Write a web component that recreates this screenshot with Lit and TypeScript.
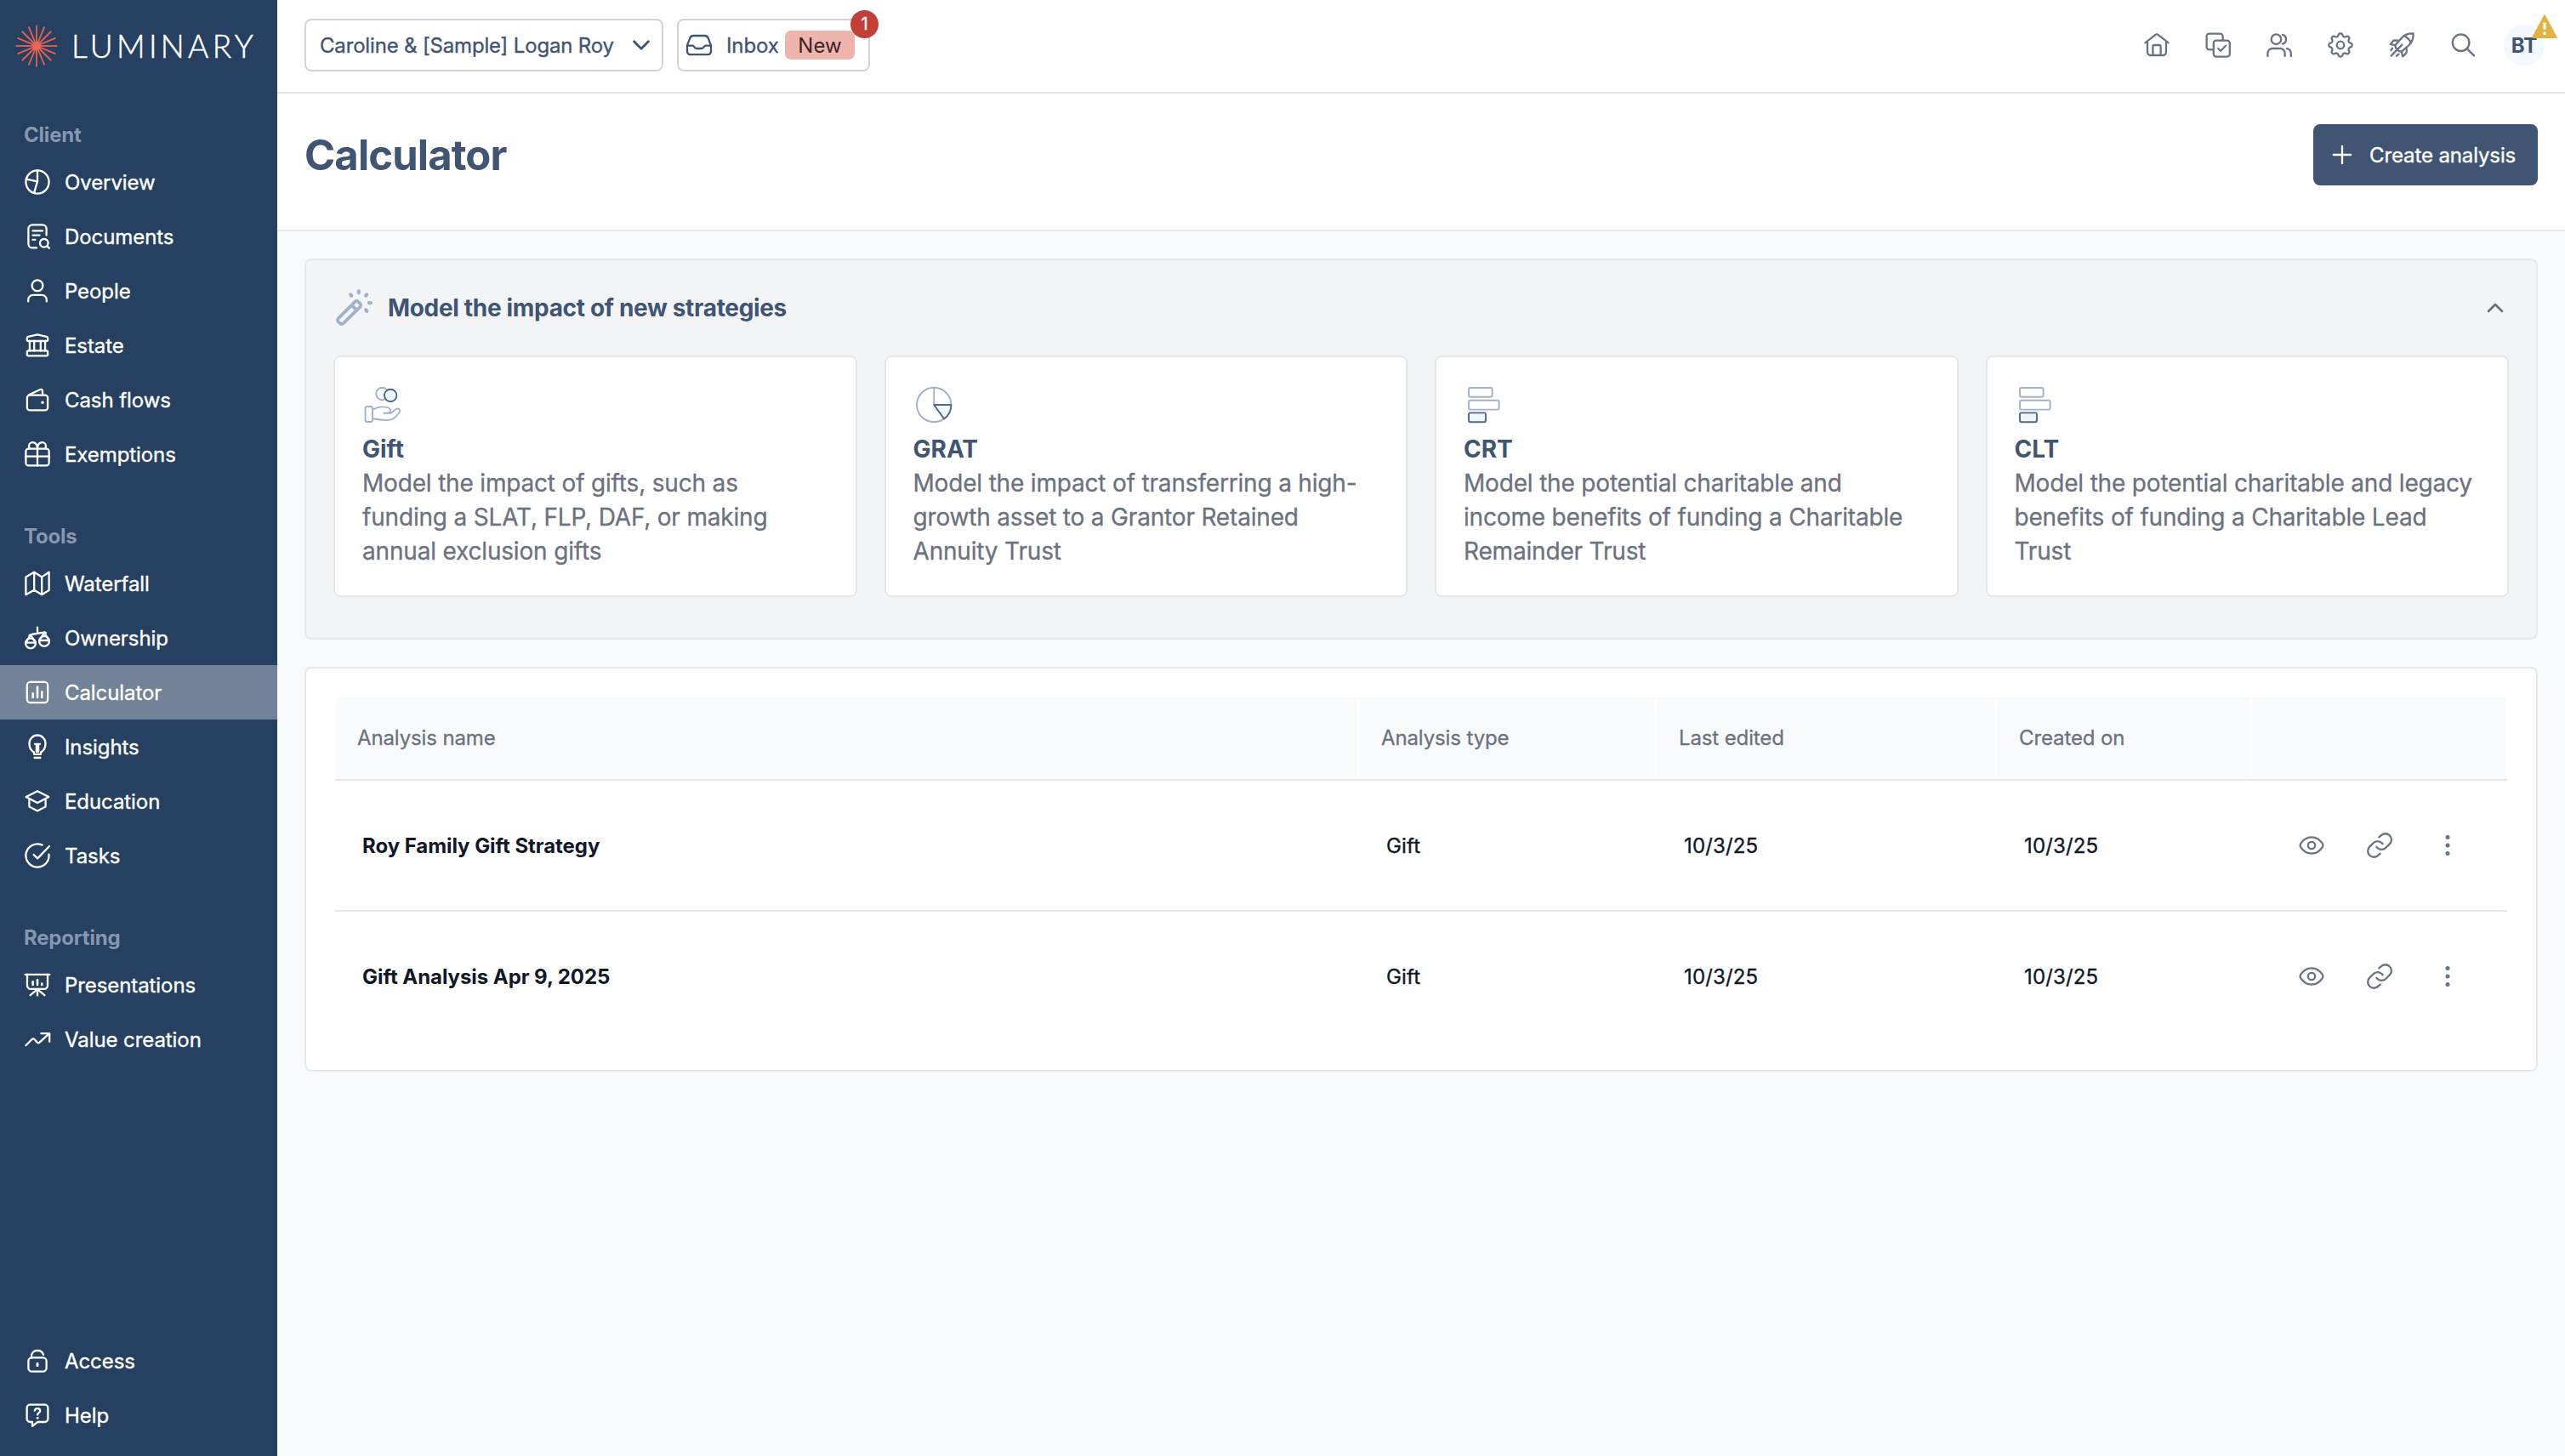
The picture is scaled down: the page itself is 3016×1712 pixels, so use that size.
import { LitElement, html, css, svg, nothing } from "lit";
import type { TemplateResult } from "lit";
import { customElement, property } from "lit/decorators.js";
import { classMap } from "lit/directives/class-map.js";

/** Outline of an eight-lobed cog, sampled around the centre. */
const cogPath = (() => {
  const points: string[] = [];
  for (let i = 0; i < 160; i++) {
    const a = (i / 160) * Math.PI * 2;
    const wave = Math.tanh(1.5 * Math.cos(8 * a)) / Math.tanh(1.5);
    const r = 12.1 + 1.5 * wave;
    points.push(`${(18 + r * Math.cos(a)).toFixed(2)} ${(18 + r * Math.sin(a)).toFixed(2)}`);
  }
  return `M${points.join("L")}Z`;
})();

/** Line icons, all drawn on a 36 x 36 grid. */
const ICONS: Record<string, TemplateResult> = {
  overview: svg`<circle cx="18" cy="18" r="13.6"/><path d="M18 4.4V17.6M4.8 14.6L18 17.4L14 31"/>`,
  documents: svg`<path d="M28.6 16.5V9A4.6 4.6 0 0 0 24 4.4H12A4.6 4.6 0 0 0 7.4 9V27A4.6 4.6 0 0 0 12 31.4H17"/><path d="M12.5 11.4H24M12.5 16.6H20.6M12.5 21.8H15.4"/><circle cx="25.8" cy="25.8" r="4.8"/><path d="M29.4 29.4L32 31.8"/>`,
  person: svg`<circle cx="18" cy="11.8" r="6.4"/><path d="M7.2 30.5V28.4A5.6 5.6 0 0 1 12.8 22.8H23.2A5.6 5.6 0 0 1 28.8 28.4V30.5"/>`,
  bank: svg`<path d="M5.8 9.6Q5.8 8.2 7.2 7.8L17 5.6Q18 5.4 19 5.6L28.8 7.8Q30.2 8.2 30.2 9.6V11.4Q30.2 13 28.6 13H7.4Q5.8 13 5.8 11.4Z"/><path d="M8.9 13V24.4M14.2 13V24.4M21.8 13V24.4M27.1 13V24.4"/><rect x="5.8" y="24.4" width="24.4" height="6" rx="1.6"/>`,
  wallet: svg`<rect x="5.9" y="12.6" width="24.2" height="17.8" rx="3"/><path d="M8 12.2L20.8 6.2Q24 5 24 8V12.4"/><circle cx="24" cy="21.3" r="1.7" fill="currentColor" stroke="none"/>`,
  gift: svg`<rect x="4.4" y="11.6" width="27.2" height="19.8" rx="3"/><path d="M4.4 20.6H31.6M18 11.6V31.4M18 11.4C17.6 6 15 4.2 12.4 4.2C9.6 4.2 8 6.4 8 8.4C8 9.8 8.4 10.6 9 11.4M18 11.4C18.4 6 21 4.2 23.6 4.2C26.4 4.2 28 6.4 28 8.4C28 9.8 27.6 10.6 27 11.4"/>`,
  map: svg`<path d="M4.4 10.4L14.2 4.8L23.2 10.4L31.6 4.8V26L23.2 31.2L14.2 25.8L4.4 31.2ZM14.2 4.8V25.8M23.2 10.4V31.2"/>`,
  scales: svg`<path d="M18 5.6V12.6M8.4 15.2Q9.4 14.4 11 14L25 11.6Q26.8 11.2 28 12"/><circle cx="10" cy="24.4" r="5.9"/><circle cx="26" cy="22" r="5.9"/><path d="M4.2 23.6L10 14.6L15.8 23.6ZM20.2 21L26 11.8L31.8 21Z"/>`,
  chart: svg`<rect x="5.8" y="5.8" width="24.4" height="24.4" rx="4"/><path stroke-width="2.6" d="M12.7 19.4V24M18 11.8V24M23.3 17.6V24"/>`,
  bulb: svg`<path d="M14 26.8V24.6C10.6 22.6 8.5 18.4 8.5 14.2A9.5 9.7 0 0 1 27.5 14.2C27.5 18.4 25.4 22.6 22 24.6V26.8Z"/><path d="M15 14.8H21M16.9 15V24M19.1 15V24M14.6 31H21.4"/>`,
  education: svg`<path d="M4.6 13L18 6.2L31.4 13L18 20Z"/><path d="M8.4 15.4V24.4L18 29.6L27.6 24.4V15.4"/>`,
  tasks: svg`<path d="M23.6 5.6A13.6 13.6 0 1 0 31.5 16.6"/><path d="M13.6 17L18.2 21.4L32 7"/>`,
  presentation: svg`<path d="M3.6 5.8H32.4"/><path d="M6 5.8V18.8A4 4 0 0 0 10 22.8H26A4 4 0 0 0 30 18.8V5.8"/><path stroke-width="2.6" d="M12.6 14.2V18M18 12V18M23.3 16.6V18"/><path d="M18 23V30.6M16.6 24.4L9.6 30.2M19.4 24.4L26.4 30.2"/>`,
  trend: svg`<path d="M4.4 25.2L11.6 18Q13 16.8 14.4 18L17.8 21.6Q19.2 22.8 20.6 21.6L31.4 11.6"/><path d="M22.4 11.2H32.2V20.8"/>`,
  lock: svg`<rect x="7.4" y="14.4" width="21.2" height="16.2" rx="4"/><path d="M11 14.4V12.8C11 8.6 14 6 18 6C21.6 6 24.2 8 25 10.8"/><path stroke-width="2.8" stroke-linecap="butt" d="M18 20.2V25"/>`,
  help: svg`<path d="M9.4 5.6H26.6A3.8 3.8 0 0 1 30.4 9.4V22.2A3.8 3.8 0 0 1 26.6 26H18.4L12 30.8V26H9.4A3.8 3.8 0 0 1 5.6 22.2V9.4A3.8 3.8 0 0 1 9.4 5.6Z"/><path d="M14.9 12.6C15.2 11 16.4 10.2 18.1 10.2C20 10.2 21.2 11.4 21.2 13C21.2 15.2 18.2 15.2 18.2 17.6"/><circle cx="18.2" cy="21.3" r="1.4" fill="currentColor" stroke="none"/>`,
  home: svg`<path d="M4.6 15.2L16.8 5.6Q18 4.6 19.2 5.6L31.4 15.2M7 13.6V26.6A3.4 3.4 0 0 0 10.4 30H25.6A3.4 3.4 0 0 0 29 26.6V13.6M13.4 30V19.6Q13.4 18 15 18H21Q22.6 18 22.6 19.6V30"/>`,
  copy: svg`<path d="M12.2 23.4H7.6A3 3 0 0 1 4.6 20.4V7.6A3 3 0 0 1 7.6 4.6H20.6A3 3 0 0 1 23.6 7.6V12.2"/><rect x="12.8" y="12.6" width="19" height="19" rx="3"/><path d="M18.2 22L21.2 24.8L27 18.8"/>`,
  users: svg`<circle cx="14.4" cy="11.2" r="5.8"/><path d="M4.4 31V27.6A5.6 5.6 0 0 1 10 22H19A5.6 5.6 0 0 1 24.6 27.6V31M21.8 5.8C24.6 6.4 26 8.8 26 11.2C26 13.8 24.4 16 21.8 16.6M26.8 22.2C30 22.8 31.8 25.2 31.8 28V31"/>`,
  cog: svg`<path d=${cogPath}/><circle cx="18" cy="18" r="4.3"/>`,
  rocket: svg`<path d="M10.2 18.4L18 9.4C21.6 5.4 26 4.2 31.6 4.4C32 10 30.4 14.2 26.6 18L17.6 25.8L14.4 24.8L11.2 21.6Z"/><path d="M20.8 7C23.6 8.4 27.2 11.8 29 15.2M13.6 12.6L9.4 12.4Q8.4 12.4 7.8 13.2L4.8 17L10.4 18.2M23.6 21.2L23.8 26Q23.8 27 23 27.8L19.2 31.4L17.8 25.8M18.4 17.6L5.6 30.6M7 21.8L5.4 24M14.4 28.6L11.8 30.8"/>`,
  search: svg`<circle cx="15.6" cy="15.2" r="9.8"/><path d="M22.8 22.4L31 30.4"/>`,
  inbox: svg`<path d="M4 18.4L7.6 9.2Q8.6 7 11 7H25Q27.4 7 28.4 9.2L32 18.4V25.6A3.6 3.6 0 0 1 28.4 29.2H7.6A3.6 3.6 0 0 1 4 25.6Z"/><path d="M4 18.6H10.6C12 18.6 12.4 22 15 22H21C23.6 22 24 18.6 25.4 18.6H32"/>`,
  plus: svg`<path d="M18 7.8V28.2M7.8 18H28.2"/>`,
  down: svg`<path stroke-width="2.8" d="M9.6 13.8L18 22.2L26.4 13.8"/>`,
  up: svg`<path stroke-width="2.6" d="M10 22L18 14L26 22"/>`,
  eye: svg`<path d="M5 16.2C8.6 10.8 13 8.4 18 8.4S27.4 10.8 31 16.2Q32 18 31 19.8C27.4 25.2 23 27.6 18 27.6S8.6 25.2 5 19.8Q4 18 5 16.2Z"/><circle cx="18" cy="18" r="4.2"/>`,
  link: svg`<path d="M17.3 8.4L19.6 6.4A7.1 7.1 0 0 1 29.8 16.4L25.4 20.8A7.1 7.1 0 0 1 15.2 20.8L14.4 19.8M18.7 27.6L16.4 29.6A7.1 7.1 0 0 1 6.2 19.6L10.6 15.2A7.1 7.1 0 0 1 20.8 15.2L21.6 16.2"/>`,
  dots: svg`<g fill="currentColor" stroke="none"><circle cx="18" cy="8.4" r="2.5"/><circle cx="18" cy="18" r="2.5"/><circle cx="18" cy="27.6" r="2.5"/></g>`,
};

/** Two-tone illustrations for strategies, on a 48 x 48 grid. */
const ART: Record<string, TemplateResult> = {
  gift: svg`<circle cx="23.4" cy="11" r="7.2"/><circle class="hot" cx="33.2" cy="13" r="7.2"/>
    <rect x="3.6" y="26" width="8.4" height="18" rx="2"/>
    <path d="M12.4 29.6C17 27 20 26 24 26.4C29 26.6 33.4 27.6 33.4 31C33.4 33.6 30 33.8 25.4 33.8H33.2C36 33.6 37.4 29.4 40.6 28.6C43.4 28.2 45 30.6 43.6 32.8C41 36.4 38.6 39.4 34.6 41.2C27 43.6 20 41.2 12.4 40.2"/>`,
  pie: svg`<circle cx="24.2" cy="24" r="20.2"/><path d="M24.2 3.8V24"/><path class="hot" d="M24.2 24H44.4C44.4 31 41 37 36 40.4Z"/>`,
  bars: svg`<rect x="6" y="4" width="27.6" height="10.8" rx="2"/><rect x="6" y="18.8" width="35.6" height="10.8" rx="2"/><rect class="hot" x="6" y="33.4" width="20" height="10.8" rx="2"/>`,
  wand: svg`<path stroke-width="3.8" d="M5.8 36.4L25.4 16.8Q27.4 15 29.4 16.8L31.4 18.8Q33 20.8 31.4 22.8L11.8 42.2Q9.8 44 7.8 42.2L5.8 40.4Q4.2 38.4 5.8 36.4ZM21.6 20.8L27.4 26.6"/>
    <path stroke-width="4.2" d="M29.8 4.4V6.2M20.2 8.4L21.2 9.6M39.2 8.4L38.2 9.6M42 18.2H44M38.2 26.4L39.4 27.8"/>`,
};

@customElement("line-icon")
class LineIcon extends LitElement {
  @property() name = "";
  static styles = css`
    :host { display: block; flex: none; width: 36px; height: 36px; }
    svg { display: block; width: 36px; height: 36px; overflow: visible; }
  `;
  render() {
    return html`<svg viewBox="0 0 36 36" fill="none" stroke="currentColor" stroke-width="2.3"
      stroke-linecap="round" stroke-linejoin="round">${ICONS[this.name]}</svg>`;
  }
}

@customElement("strategy-art")
class StrategyArt extends LitElement {
  @property() name = "";
  static styles = css`
    :host { display: block; flex: none; width: 48px; height: 48px; }
    svg { display: block; overflow: visible; }
    .hot { fill: #eff6ff; stroke: #4f6688; }
  `;
  render() {
    return html`<svg width="48" height="48" viewBox="0 0 48 48" fill="none" stroke="#a3b1c6"
      stroke-width="1.9" stroke-linecap="round" stroke-linejoin="round">${ART[this.name]}</svg>`;
  }
}

interface NavGroup { label: string; items: [string, string][]; }

const NAV: NavGroup[] = [
  { label: "Client", items: [["overview", "Overview"], ["documents", "Documents"], ["person", "People"], ["bank", "Estate"], ["wallet", "Cash flows"], ["gift", "Exemptions"]] },
  { label: "Tools", items: [["map", "Waterfall"], ["scales", "Ownership"], ["chart", "Calculator"], ["bulb", "Insights"], ["education", "Education"], ["tasks", "Tasks"]] },
  { label: "Reporting", items: [["presentation", "Presentations"], ["trend", "Value creation"]] },
];
const NAV_FOOT: [string, string][] = [["lock", "Access"], ["help", "Help"]];

@customElement("side-nav")
class SideNav extends LitElement {
  @property() active = "";
  static styles = css`
    :host { display: flex; flex-direction: column; box-sizing: border-box; width: 326px; height: 100%; padding-bottom: 16px; background: #254060; color: #fff; }
    .brand { display: flex; align-items: center; gap: 16px; height: 108px; padding-left: 18px; box-sizing: border-box; }
    .burst { display: block; flex: none; }
    .word { font-family: Lato, sans-serif; font-weight: 300; font-size: 37px; line-height: 40px; letter-spacing: 4.3px; white-space: nowrap; -webkit-text-stroke: 0.5px #fff; }
    .label { height: 88px; padding: 49px 0 0 28px; line-height: 32px; font-size: 24px; font-weight: 700; letter-spacing: -0.2px; color: #8797ae; box-sizing: border-box; }
    .brand + .group .label { height: 74px; padding-top: 35px; }
    .item { display: flex; align-items: center; gap: 14px; height: 64px; padding-left: 26px; font-size: 24px; font-weight: 400; letter-spacing: -0.08px; -webkit-text-stroke: 0.35px currentColor; white-space: nowrap; }
    .item.on { background: #718299; }
    .foot { margin-top: auto; }
  `;
  private item([icon, text]: [string, string]) {
    return html`<div class=${classMap({ item: true, on: text === this.active })}>
      <line-icon name=${icon}></line-icon><span>${text}</span></div>`;
  }
  render() {
    const rays = Array.from({ length: 16 }, (_, i) =>
      svg`<line x1="25" y1="25" x2="25" y2="0.6" transform="rotate(${i * 22.5} 25 25)"/>`);
    return html`
      <div class="brand">
        <svg class="burst" width="50" height="50" viewBox="0 0 50 50" stroke="#e9604f" stroke-width="1.8">
          ${rays}<circle cx="25" cy="25" r="5" fill="#ee6352" stroke="none"/>
        </svg>
        <span class="word">LUMINARY</span>
      </div>
      ${NAV.map((g) => html`<div class="group"><div class="label">${g.label}</div>${g.items.map((i) => this.item(i))}</div>`)}
      <div class="foot">${NAV_FOOT.map((i) => this.item(i))}</div>
    `;
  }
}

@customElement("top-bar")
class TopBar extends LitElement {
  static styles = css`
    :host { display: flex; align-items: center; box-sizing: border-box; height: 110px; padding: 0 24px 2px 32px; border-bottom: 2px solid #e5e7eb; background: #fff; color: #3f5573; font-size: 24px; font-weight: 400; }
    .box { position: relative; display: flex; align-items: center; box-sizing: border-box; height: 62px; border: 2px solid #d1d5db; border-radius: 8px; white-space: nowrap; -webkit-text-stroke: 0.35px currentColor; }
    .client { width: 422px; padding: 0 6px 0 16px; justify-content: space-between; letter-spacing: -0.17px; }
    .inbox { width: 227px; margin-left: 16px; padding-left: 6px; }
    .inbox .name { width: 68px; margin-left: 14px; margin-right: 1px; letter-spacing: -0.1px; }
    .new { display: flex; align-items: center; justify-content: center; width: 82px; height: 34px; border-radius: 7px; background: #f0b4ae; color: #3b2524; -webkit-text-stroke: 0; }
    .count { position: absolute; right: -12px; top: -12px; width: 33px; height: 33px; border-radius: 50%; background: #c13f37; color: #fff; font-size: 20px; line-height: 33px; text-align: center; }
    .tools { display: flex; gap: 36px; margin-left: auto; color: #6b7280; }
    .avatar { position: relative; width: 48px; height: 48px; margin-left: 30px; border-radius: 50%; background: #f3f7fe; color: #3f5573; font-weight: 700; line-height: 49px; text-align: center; }
    .warn { position: absolute; left: 33px; top: -13px; }
  `;
  render() {
    return html`
      <div class="box client"><span>Caroline &amp; [Sample] Logan Roy</span><line-icon name="down"></line-icon></div>
      <div class="box inbox"><line-icon name="inbox"></line-icon><span class="name">Inbox</span><span class="new">New</span><span class="count">1</span></div>
      <div class="tools">${["home", "copy", "users", "cog", "rocket", "search"].map((n) => html`<line-icon name=${n}></line-icon>`)}</div>
      <div class="avatar">BT
        <svg class="warn" width="30" height="30" viewBox="0 0 30 30">
          <path d="M15 3.4L28 27.6H2Z" fill="#e2b43f" stroke="#e2b43f" stroke-width="3" stroke-linejoin="round"/>
          <path d="M15 10.5V18.5M15 21.4V25" stroke="#fff" stroke-width="3.2"/>
        </svg>
      </div>
    `;
  }
}

const STRATEGIES = [
  { art: "gift", title: "Gift", lines: ["Model the impact of gifts, such as", "funding a SLAT, FLP, DAF, or making", "annual exclusion gifts"] },
  { art: "pie", title: "GRAT", lines: ["Model the impact of transferring a high-", "growth asset to a Grantor Retained", "Annuity Trust"] },
  { art: "bars", title: "CRT", lines: ["Model the potential charitable and", "income benefits of funding a Charitable", "Remainder Trust"] },
  { art: "bars", title: "CLT", lines: ["Model the potential charitable and legacy", "benefits of funding a Charitable Lead", "Trust"] },
];

@customElement("strategy-panel")
class StrategyPanel extends LitElement {
  static styles = css`
    :host { display: block; box-sizing: border-box; height: 448px; padding: 0 32px; border: 2px solid #e5e7eb; border-radius: 8px; background: #f2f4f6; }
    .head { display: flex; align-items: center; height: 112px; color: #3f5573; }
    .head h2 { margin: 0 auto 0 16px; font-size: 28px; font-weight: 700; line-height: 40px; letter-spacing: -0.33px; }
    .toggle { color: #6b7077; margin-right: -2px; }
    .cards { display: grid; grid-template-columns: repeat(4, 1fr); gap: 32px; }
    .card { box-sizing: border-box; height: 284px; padding: 32px; border: 2px solid #e5e7eb; border-radius: 8px; background: #fff; font-size: 28px; line-height: 40px; }
    h3 { margin: 8px 0 0; font-size: 28px; line-height: 40px; font-weight: 700; letter-spacing: 0; color: #3f5573; }
    .line { display: block; color: #6b7280; white-space: nowrap; letter-spacing: -0.18px; -webkit-text-stroke: 0.3px currentColor; }
  `;
  render() {
    return html`
      <div class="head"><strategy-art name="wand"></strategy-art><h2>Model the impact of new strategies</h2>
        <line-icon class="toggle" name="up"></line-icon></div>
      <div class="cards">${STRATEGIES.map((s) => html`<div class="card">
        <strategy-art name=${s.art}></strategy-art><h3>${s.title}</h3>
        ${s.lines.map((l) => html`<span class="line">${l} </span>`)}
      </div>`)}</div>
    `;
  }
}

const ANALYSES = [
  { name: "Roy Family Gift Strategy", type: "Gift", edited: "10/3/25", created: "10/3/25" },
  { name: "Gift Analysis Apr 9, 2025", type: "Gift", edited: "10/3/25", created: "10/3/25" },
];

@customElement("analysis-table")
class AnalysisTable extends LitElement {
  static styles = css`
    :host { display: block; box-sizing: border-box; height: 476px; padding: 34px; border: 2px solid #e5e7eb; border-radius: 8px; background: #fff; font-size: 24px; }
    .row { display: grid; grid-template-columns: 1fr 350px 400px 300px 300px; align-items: center; box-sizing: border-box; height: 154px; border-bottom: 2px solid #e5e7eb; color: #111827; }
    .row:last-child { border-bottom-color: transparent; }
    .row.head { height: 98px; padding-bottom: 2px; }
    .th { display: flex; align-items: center; box-sizing: border-box; height: 94px; padding-left: 26px; border-right: 2px solid #fff; background: #f9fafc; color: #6b7280; font-weight: 400; letter-spacing: -0.12px; -webkit-text-stroke: 0.3px currentColor; }
    .th:first-child { border-top-left-radius: 6px; }
    .td { padding-left: 32px; font-weight: 400; letter-spacing: 0.15px; -webkit-text-stroke: 0.35px currentColor; }
    .td.name { font-weight: 700; letter-spacing: -0.06px; -webkit-text-stroke: 0; }
    .actions { display: flex; gap: 44px; padding-left: 52px; color: #6b7280; }
  `;
  render() {
    return html`
      <div class="row head">${["Analysis name", "Analysis type", "Last edited", "Created on", ""].map((t) => html`<div class="th">${t || nothing}</div>`)}</div>
      ${ANALYSES.map((a) => html`<div class="row">
        <div class="td name">${a.name}</div><div class="td">${a.type}</div><div class="td">${a.edited}</div><div class="td">${a.created}</div>
        <div class="actions"><line-icon name="eye"></line-icon><line-icon name="link"></line-icon><line-icon name="dots"></line-icon></div>
      </div>`)}
    `;
  }
}

@customElement("app-root")
class AppRoot extends LitElement {
  static styles = css`
    :host { display: flex; width: 100%; height: 100vh; overflow: hidden; background: #f9fafc; font-family: Inter, "Liberation Sans", sans-serif; }
    side-nav { flex: none; }
    main { flex: 1; min-width: 0; }
    .title { display: flex; align-items: center; justify-content: space-between; box-sizing: border-box; height: 162px; padding: 0 32px 16px; border-bottom: 2px solid #e5e7eb; background: #fff; }
    h1 { margin: 1px 0 0; font-size: 49px; font-weight: 700; line-height: 60px; letter-spacing: -0.9px; color: #3f5573; }
    .create { display: flex; align-items: center; gap: 14px; box-sizing: border-box; width: 264px; height: 72px; padding-left: 16px; border-radius: 8px; background: #3f5573; color: #fff; font-size: 24px; font-weight: 400; letter-spacing: -0.12px; -webkit-text-stroke: 0.35px currentColor; white-space: nowrap; }
    .content { display: flex; flex-direction: column; gap: 32px; padding: 32px; }
  `;
  render() {
    return html`
      <side-nav active="Calculator"></side-nav>
      <main>
        <top-bar></top-bar>
        <div class="title"><h1>Calculator</h1><div class="create"><line-icon name="plus"></line-icon><span>Create analysis</span></div></div>
        <div class="content"><strategy-panel></strategy-panel><analysis-table></analysis-table></div>
      </main>
    `;
  }
}
